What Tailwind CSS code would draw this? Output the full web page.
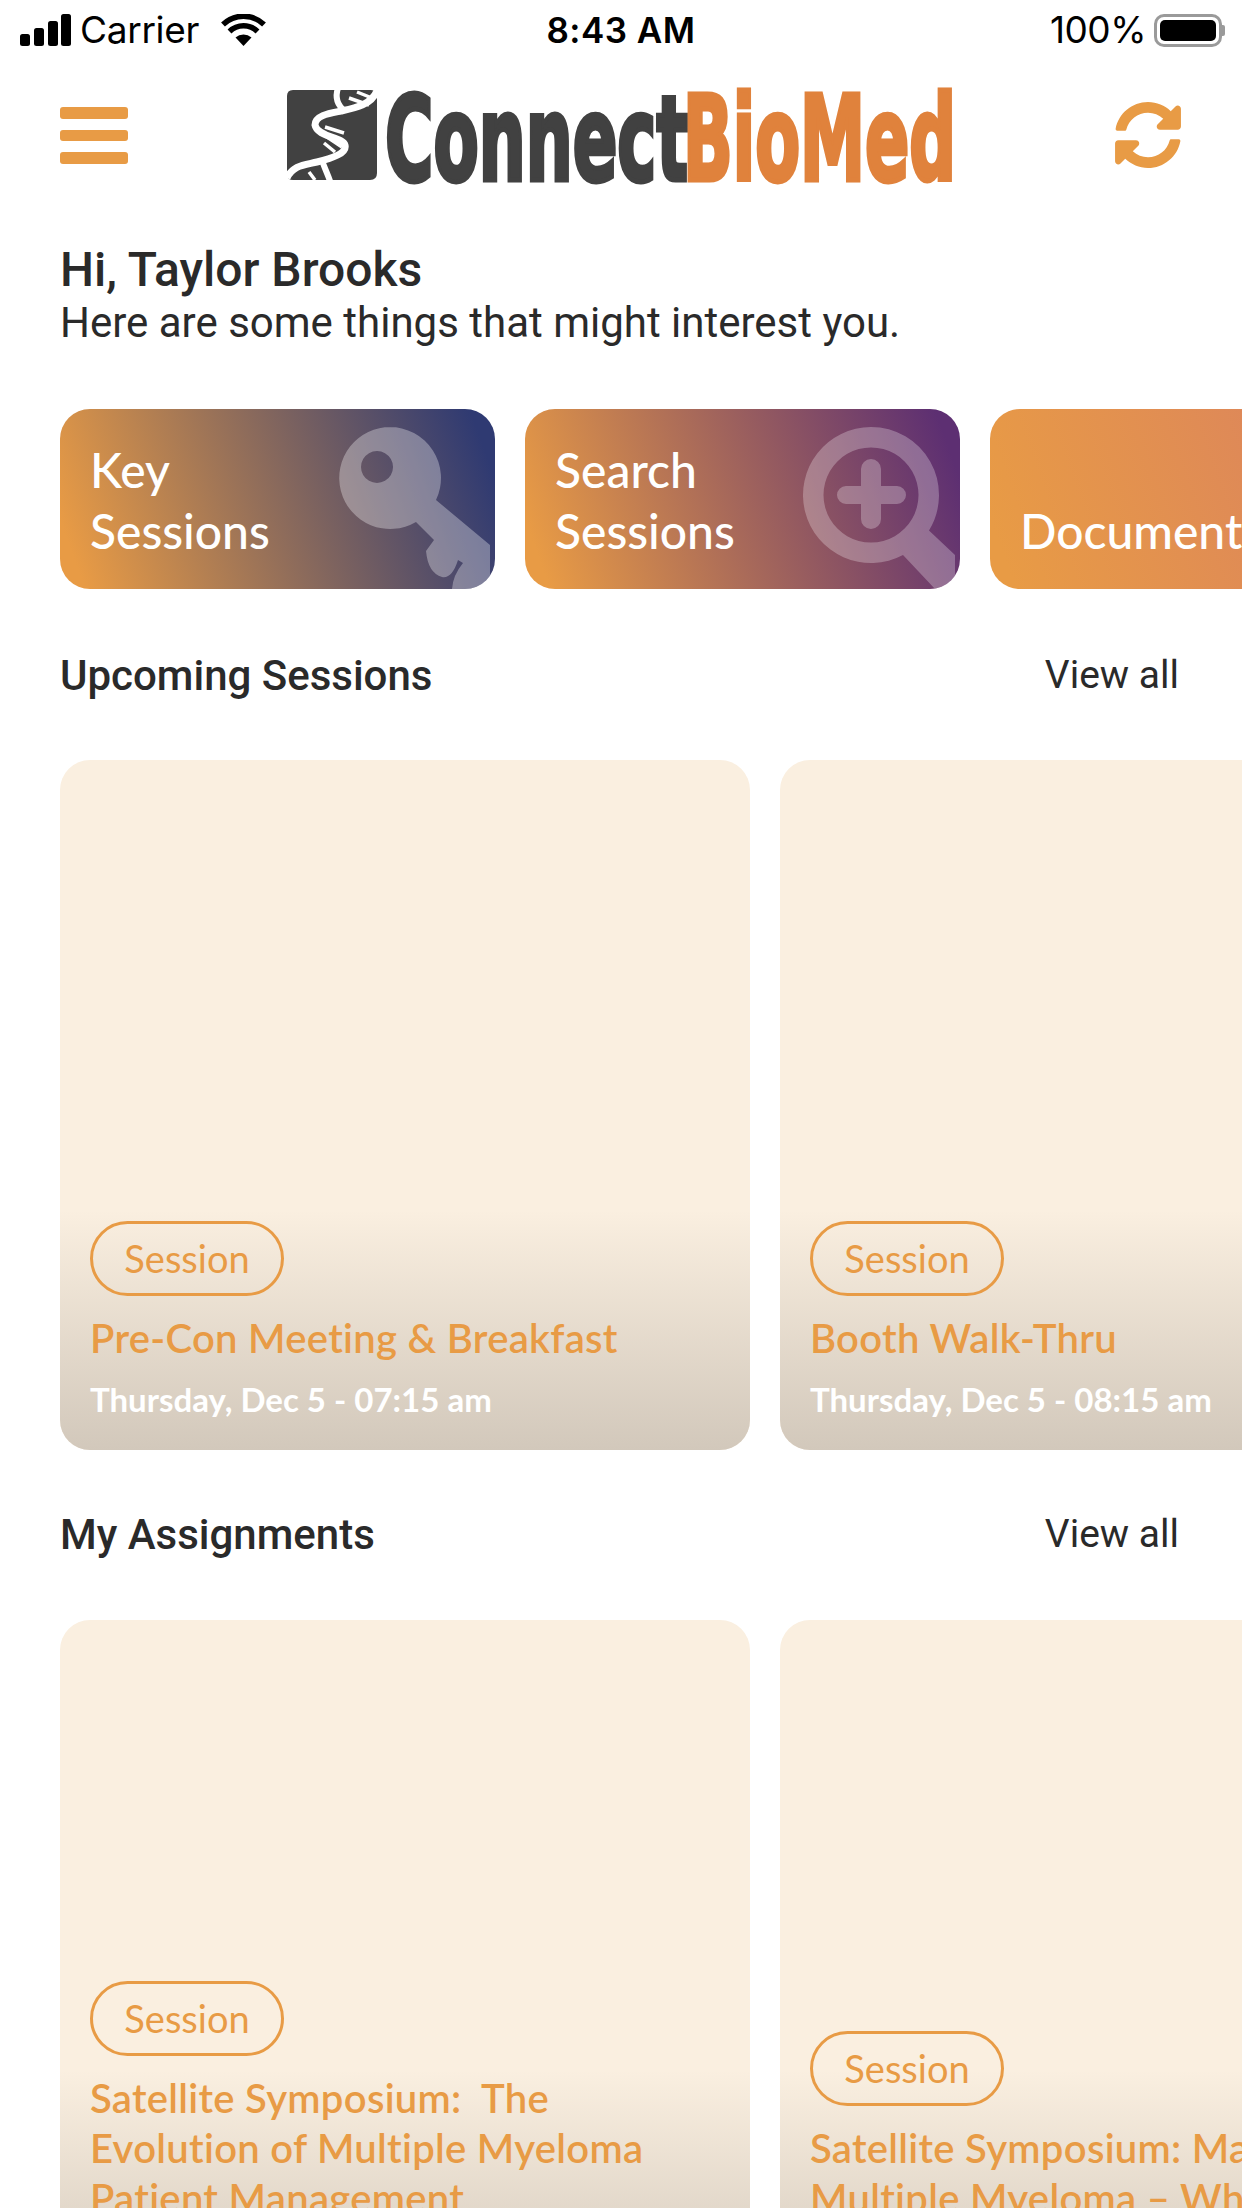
<!DOCTYPE html>
<html><head><meta charset="utf-8"><script src="https://cdn.jsdelivr.net/npm/@tailwindcss/browser@4"></script></head>
<body class="bg-white">
<div class="w-[1242px] h-[2208px] overflow-hidden flex flex-col font-['Roboto',sans-serif] text-[#2a2a2a]">
  <div class="h-[60px] shrink-0 grid grid-cols-[1fr_auto_1fr] items-center text-black font-['Inter',sans-serif] text-[37px]">
    <div class="flex items-center pl-[20px]">
      <svg width="52" height="32" viewBox="0 0 52 32" fill="#000"><rect x="0" y="20" width="10" height="12" rx="2.5"/><rect x="14" y="14" width="10" height="18" rx="2.5"/><rect x="28" y="7" width="10" height="25" rx="2.5"/><rect x="41" y="0" width="10" height="32" rx="2.5"/></svg>
      <span class="ml-[8px] tracking-[-0.3px]">Carrier</span>
      <svg class="ml-[21px]" width="47" height="32" viewBox="0 0 47 32"><path d="M23.5 32 L15.5 23.5 A12 12 0 0 1 31.5 23.5 Z" fill="#000"/><path d="M9.5 17.5 A20 20 0 0 1 37.500 17.500" stroke="#000" stroke-width="5.500" fill="none"/><path d="M3 10.500 A29.500 29.500 0 0 1 44 10.500" stroke="#000" stroke-width="5.500" fill="none"/></svg>
    </div>
    <div class="font-semibold text-[35px] tracking-[0.5px]">8:43 AM</div>
    <div class="flex items-center justify-end pr-[17px]">
      <span class="tracking-[-0.5px]">100%</span>
      <div class="ml-[8px] w-[68px] h-[33px] rounded-[10px] border-[3px] border-[#9a9a9a] p-[3px]"><div class="w-full h-full bg-black rounded-[5px]"></div></div>
      <div class="w-[3px] h-[11px] bg-[#9a9a9a] rounded-r-[2px]"></div>
    </div>
  </div>

  <div class="h-[150px] shrink-0 px-[60px] flex items-center justify-between">
    <div class="w-[68px] flex flex-col gap-[11px]">
      <div class="h-[12px] rounded-[3px] bg-[#e89b45]"></div>
      <div class="h-[11px] rounded-[3px] bg-[#e89b45]"></div>
      <div class="h-[12px] rounded-[3px] bg-[#e89b45]"></div>
    </div>
    <svg class="ml-[-1px]" width="672" height="100" viewBox="0 0 672 100">
      <path d="M8 5 H86 Q92 5 92 11 V88 Q92 95 85 95 H8 Q2 95 2 89 V11 Q2 5 8 5 Z" fill="#414141"/>
      <path d="M53 3 C50 12 52 20 60 26 M38 78 C40 84 43 90 45 96" stroke="#fff" stroke-width="6" fill="none"/>
      <path d="M2 93 C8 80 20 80 32 77 C48 73 62 68 60 60 C58 52 32 52 30 40 C30 30 46 28 56 26 C70 23 86 20 92 6" stroke="#fff" stroke-width="7" fill="none"/>
      <path d="M64 13 L84 20 M72 7 L87 13 M40 42 L59 48 M39 50 L57 62 M39 58 L50 67 M24 87 L30 95" stroke="#fff" stroke-width="3.500"/>
      <text x="100" y="95" font-family="'DejaVu Sans'" font-weight="700" font-size="118" textLength="303" lengthAdjust="spacingAndGlyphs" fill="#414141" stroke="#414141" stroke-width="5">Connect</text>
      <text x="398" y="95" font-family="'DejaVu Sans'" font-weight="700" font-size="118" textLength="273" lengthAdjust="spacingAndGlyphs" fill="#e0823c" stroke="#e0823c" stroke-width="5">BioMed</text>
    </svg>
    <svg width="68" height="68" viewBox="0 0 512 512" fill="#e89b45"><path d="M370.72 133.28C339.458 104.008 298.888 87.962 255.848 88c-77.458.068-144.328 53.178-162.791 126.85-1.344 5.363-6.122 9.15-11.651 9.15H24.103c-7.498 0-13.194-6.807-11.807-14.176C33.933 94.924 134.813 8 256 8c66.448 0 126.791 26.136 171.315 68.685L463.03 40.97C478.149 25.851 504 36.559 504 57.941V192c0 13.255-10.745 24-24 24H345.941c-21.382 0-32.09-25.851-16.971-40.971l41.75-41.749zM32 296h134.059c21.382 0 32.09 25.851 16.971 40.971l-41.75 41.75c31.262 29.273 71.835 45.319 114.876 45.28 77.418-.07 144.315-53.144 162.787-126.849 1.344-5.363 6.122-9.15 11.651-9.15h57.304c7.498 0 13.194 6.807 11.807 14.176C478.067 417.076 377.187 504 256 504c-66.448 0-126.791-26.136-171.315-68.685L48.97 471.03C33.851 486.149 8 475.441 8 454.059V320c0-13.255 10.745-24 24-24z"/></svg>
  </div>

  <div class="px-[60px] pt-[35px]">
    <div class="text-[48px] leading-[50px] font-medium">Hi, Taylor Brooks</div>
    <div class="text-[42px] leading-[50px] mt-[3px]">Here are some things that might interest you.</div>
  </div>

  <div class="mt-[61px] pl-[60px] flex gap-[30px] shrink-0 font-['Lato',sans-serif] font-medium text-white text-[48px] leading-[61px]">
    <div class="relative w-[435px] h-[180px] shrink-0 rounded-[30px] overflow-hidden bg-linear-[70deg] from-[#e89b45] from-5% to-[#2f3a72] to-95% pl-[30px] pb-[28px] flex flex-col justify-end">
      <div>Key</div><div>Sessions</div>
      <svg class="absolute inset-0" width="435" height="180" viewBox="0 0 435 180"><path fill-rule="evenodd" fill="#fff" fill-opacity=".32" d="M329 18a51 51 0 0 1 47 73l54 45v44h-38q1-14 11-26l-5-3q-6 19-16 17-14-4-16-26l8-11-18-18a51 51 0 1 1-25-95zm-12 24a16 16 0 1 0 .01 0z"/></svg>
    </div>
    <div class="relative w-[435px] h-[180px] shrink-0 rounded-[30px] overflow-hidden bg-linear-[70deg] from-[#e89b45] from-5% to-[#5d2f72] to-95% pl-[30px] pb-[28px] flex flex-col justify-end">
      <div>Search</div><div>Sessions</div>
      <svg class="absolute inset-0" width="435" height="180" viewBox="0 0 435 180"><path fill-rule="evenodd" fill="#fff" fill-opacity=".27" d="M346 18A68 68 0 0 1 404 121.500L430 146V180H410L378 146A68 68 0 1 1 346 18ZM346 38.500a47.500 47.500 0 1 0 .01 0z"/><path fill="#fff" fill-opacity=".27" d="M336 60a10 10 0 0 1 20 0v17h16a9 9 0 0 1 0 18h-16v15a10 10 0 0 1-20 0v-15h-15a9 9 0 0 1 0-18h15z"/></svg>
    </div>
    <div class="relative w-[435px] h-[180px] shrink-0 rounded-[30px] overflow-hidden bg-linear-[70deg] from-[#e89b45] from-5% to-[#d97f62] to-95% pl-[30px] pb-[28px] flex flex-col justify-end">
      <div>Documents</div>
    </div>
  </div>

  <div class="mt-[56px] h-[60px] shrink-0 pl-[60px] pr-[63px] flex items-center justify-between">
    <div class="text-[42px] font-medium">Upcoming Sessions</div>
    <div class="text-[39px]">View all</div>
  </div>

  <div class="mt-[55px] pl-[60px] flex gap-[30px] shrink-0 font-['Lato',sans-serif] [font-variant-ligatures:none]">
    <div class="relative w-[690px] h-[690px] shrink-0 rounded-[30px] overflow-hidden bg-[#faefe0]">
      <div class="absolute inset-x-0 bottom-0 h-[240px] bg-linear-to-b from-[#d2c8bb]/0 to-[#d2c8bb]"></div>
      <div class="absolute inset-x-0 bottom-0 pl-[30px] pb-[26px]">
        <div class="w-[194px] h-[75px] rounded-full border-[3px] border-[#e89b45] text-[#e89b45] text-[38px] flex items-center justify-center">Session</div>
        <div class="mt-[17px] text-[40px] leading-[50px] font-semibold text-[#e89b45] whitespace-nowrap tracking-[0.3px]">Pre-Con Meeting &amp; Breakfast</div>
        <div class="mt-[11px] text-[33px] leading-[50px] font-bold text-white whitespace-nowrap">Thursday, Dec 5 - 07:15 am</div>
      </div>
    </div>
    <div class="relative w-[690px] h-[690px] shrink-0 rounded-[30px] overflow-hidden bg-[#faefe0]">
      <div class="absolute inset-x-0 bottom-0 h-[240px] bg-linear-to-b from-[#d2c8bb]/0 to-[#d2c8bb]"></div>
      <div class="absolute inset-x-0 bottom-0 pl-[30px] pb-[26px]">
        <div class="w-[194px] h-[75px] rounded-full border-[3px] border-[#e89b45] text-[#e89b45] text-[38px] flex items-center justify-center">Session</div>
        <div class="mt-[17px] text-[40px] leading-[50px] font-semibold text-[#e89b45] whitespace-nowrap tracking-[0.3px]">Booth Walk-Thru</div>
        <div class="mt-[11px] text-[33px] leading-[50px] font-bold text-white whitespace-nowrap">Thursday, Dec 5 - 08:15 am</div>
      </div>
    </div>
  </div>

  <div class="mt-[54px] h-[60px] shrink-0 pl-[60px] pr-[63px] flex items-center justify-between">
    <div class="text-[42px] font-medium">My Assignments</div>
    <div class="text-[39px]">View all</div>
  </div>

  <div class="mt-[56px] pl-[60px] flex gap-[30px] shrink-0 font-['Lato',sans-serif] [font-variant-ligatures:none]">
    <div class="relative w-[690px] h-[690px] shrink-0 rounded-[30px] overflow-hidden bg-[#faefe0]">
      <div class="absolute inset-x-0 bottom-0 h-[240px] bg-linear-to-b from-[#d2c8bb]/0 to-[#d2c8bb]"></div>
      <div class="absolute inset-x-0 bottom-0 pl-[30px] pb-[26px]">
        <div class="w-[194px] h-[75px] rounded-full border-[3px] border-[#e89b45] text-[#e89b45] text-[38px] flex items-center justify-center">Session</div>
        <div class="mt-[17px] text-[40px] leading-[50px] font-semibold text-[#e89b45] whitespace-nowrap tracking-[0.3px]">Satellite Symposium:&nbsp; The<br>Evolution of Multiple Myeloma<br>Patient Management</div>
        <div class="mt-[11px] text-[33px] leading-[50px] font-bold text-white whitespace-nowrap">Thursday, Dec 5 - 12:00 pm</div>
      </div>
    </div>
    <div class="relative w-[690px] h-[690px] shrink-0 rounded-[30px] overflow-hidden bg-[#faefe0]">
      <div class="absolute inset-x-0 bottom-0 h-[240px] bg-linear-to-b from-[#d2c8bb]/0 to-[#d2c8bb]"></div>
      <div class="absolute inset-x-0 bottom-0 pl-[30px] pb-[26px]">
        <div class="w-[194px] h-[75px] rounded-full border-[3px] border-[#e89b45] text-[#e89b45] text-[38px] flex items-center justify-center">Session</div>
        <div class="mt-[17px] text-[40px] leading-[50px] font-semibold text-[#e89b45] whitespace-nowrap tracking-[0.3px]">Satellite Symposium: Managing<br>Multiple Myeloma – What's Next</div>
        <div class="mt-[11px] text-[33px] leading-[50px] font-bold text-white whitespace-nowrap">Thursday, Dec 5 - 18:00 pm</div>
      </div>
    </div>
  </div>
</div>
</body></html>
